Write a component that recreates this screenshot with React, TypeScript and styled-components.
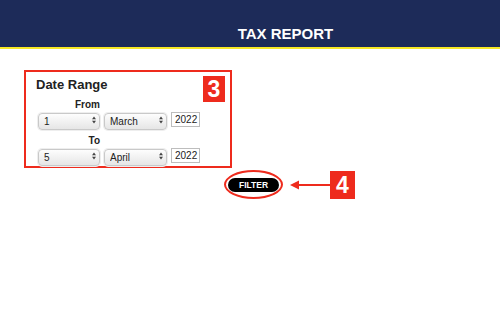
import styled, { createGlobalStyle } from 'styled-components'

const GlobalStyle = createGlobalStyle`
  html, body {
    margin: 0;
    padding: 0;
    background: #ffffff;
    font-family: "Liberation Sans", Arial, sans-serif;
  }
`

const RED = '#ee2b1d'

const Header = styled.header`
  height: 49px;
  box-sizing: border-box;
  padding: 25px 0 0 71px;
  background: #1d2b59;
  border-bottom: 2px solid #f7e826;
  display: flex;
  justify-content: center;
`

const Title = styled.h1`
  margin: 0;
  font-size: 15px;
  line-height: 17px;
  font-weight: bold;
  color: #ffffff;
`

const Panel = styled.section`
  position: relative;
  box-sizing: border-box;
  width: 208px;
  height: 98px;
  margin: 21px 0 0 24px;
  padding: 5px 10px 0 10px;
  border: 2px solid ${RED};
`

const PanelTitle = styled.h2`
  margin: 0;
  font-size: 13px;
  line-height: 15px;
  font-weight: bold;
  color: #222222;
`

const Fields = styled.div`
  margin: 7px 0 0 2px;
  display: flex;
  flex-direction: column;
`

const FieldLabel = styled.div<{ $gap?: number }>`
  width: 62px;
  margin-top: ${({ $gap }) => $gap ?? 0}px;
  text-align: right;
  font-size: 10px;
  line-height: 12px;
  font-weight: bold;
  color: #222222;
`

const Row = styled.div`
  display: flex;
  align-items: center;
  gap: 4px;
  height: 17px;
`

const SelectWrap = styled.div<{ $w: number }>`
  position: relative;
  width: ${({ $w }) => $w}px;
  height: 17px;
`

const Select = styled.select`
  appearance: none;
  -webkit-appearance: none;
  width: 100%;
  height: 100%;
  box-sizing: border-box;
  margin: 0;
  padding: 0 0 0 5px;
  border: 1px solid #c9c9c9;
  border-radius: 4px;
  background: linear-gradient(#fdfdfd, #e6e6e6);
  font-family: "Liberation Sans", Arial, sans-serif;
  font-size: 10px;
  color: #222222;
  box-shadow: 0 0 0 1px #eeeeee;
`

const Arrows = styled.svg`
  position: absolute;
  right: 4px;
  top: 5px;
  pointer-events: none;
`

const YearInput = styled.input`
  box-sizing: border-box;
  width: 29px;
  height: 15px;
  margin: 0;
  padding: 0 0 0 3px;
  border: 1px solid #bdbdbd;
  font-family: "Liberation Sans", Arial, sans-serif;
  font-size: 10px;
  color: #222222;
  background: #ffffff;
`

const Badge = styled.div<{ $w: number; $h: number }>`
  width: ${({ $w }) => $w}px;
  height: ${({ $h }) => $h}px;
  background: ${RED};
  color: #ffffff;
  font-weight: bold;
  font-size: 23px;
  line-height: ${({ $h }) => $h}px;
  text-align: center;
  flex-shrink: 0;
`

const PanelBadge = styled(Badge)`
  position: absolute;
  top: 4px;
  right: 5px;
`

const ActionRow = styled.div`
  display: flex;
  align-items: center;
  margin: 2px 0 0 224px;
`

const Ring = styled.div`
  box-sizing: border-box;
  width: 59px;
  height: 29px;
  border: 2px solid ${RED};
  border-radius: 50%;
  display: flex;
  align-items: center;
  justify-content: center;
`

const FilterButton = styled.button`
  width: 51px;
  height: 14px;
  padding: 0;
  border: none;
  border-radius: 7px;
  background: #000000;
  color: #ffffff;
  font-family: "Liberation Sans", Arial, sans-serif;
  font-size: 8.5px;
  font-weight: bold;
  line-height: 14px;
`

const UpDown = () => (
  <Arrows width="4" height="8" viewBox="0 0 4 8">
    <path d="M0 3.2 L2 0.5 L4 3.2 Z" fill="#444" />
    <path d="M0 4.8 L2 7.5 L4 4.8 Z" fill="#444" />
  </Arrows>
)

const months = [
  'January', 'February', 'March', 'April', 'May', 'June',
  'July', 'August', 'September', 'October', 'November', 'December',
]

const DateRow = ({ day, month, year }: { day: number; month: string; year: string }) => (
  <Row>
    <SelectWrap $w={62}>
      <Select defaultValue={day}>
        {Array.from({ length: 31 }, (_, i) => (
          <option key={i} value={i + 1}>{i + 1}</option>
        ))}
      </Select>
      <UpDown />
    </SelectWrap>
    <SelectWrap $w={63}>
      <Select defaultValue={month}>
        {months.map((m) => (
          <option key={m} value={m}>{m}</option>
        ))}
      </Select>
      <UpDown />
    </SelectWrap>
    <YearInput defaultValue={year} />
  </Row>
)

export default function App() {
  return (
    <>
      <GlobalStyle />
      <Header>
        <Title>TAX REPORT</Title>
      </Header>
      <Panel>
        <PanelTitle>Date Range</PanelTitle>
        <Fields>
          <FieldLabel>From</FieldLabel>
          <DateRow day={1} month="March" year="2022" />
          <FieldLabel $gap={7}>To</FieldLabel>
          <DateRow day={5} month="April" year="2022" />
        </Fields>
        <PanelBadge $w={22} $h={26}>3</PanelBadge>
      </Panel>
      <ActionRow>
        <Ring>
          <FilterButton>FILTER</FilterButton>
        </Ring>
        <svg width="47" height="12" viewBox="0 0 47 12">
          <path d="M12 6 H47" stroke={RED} strokeWidth="2" />
          <path d="M7 6 L16 1.5 L16 10.5 Z" fill={RED} />
        </svg>
        <Badge $w={25} $h={28}>4</Badge>
      </ActionRow>
    </>
  )
}
